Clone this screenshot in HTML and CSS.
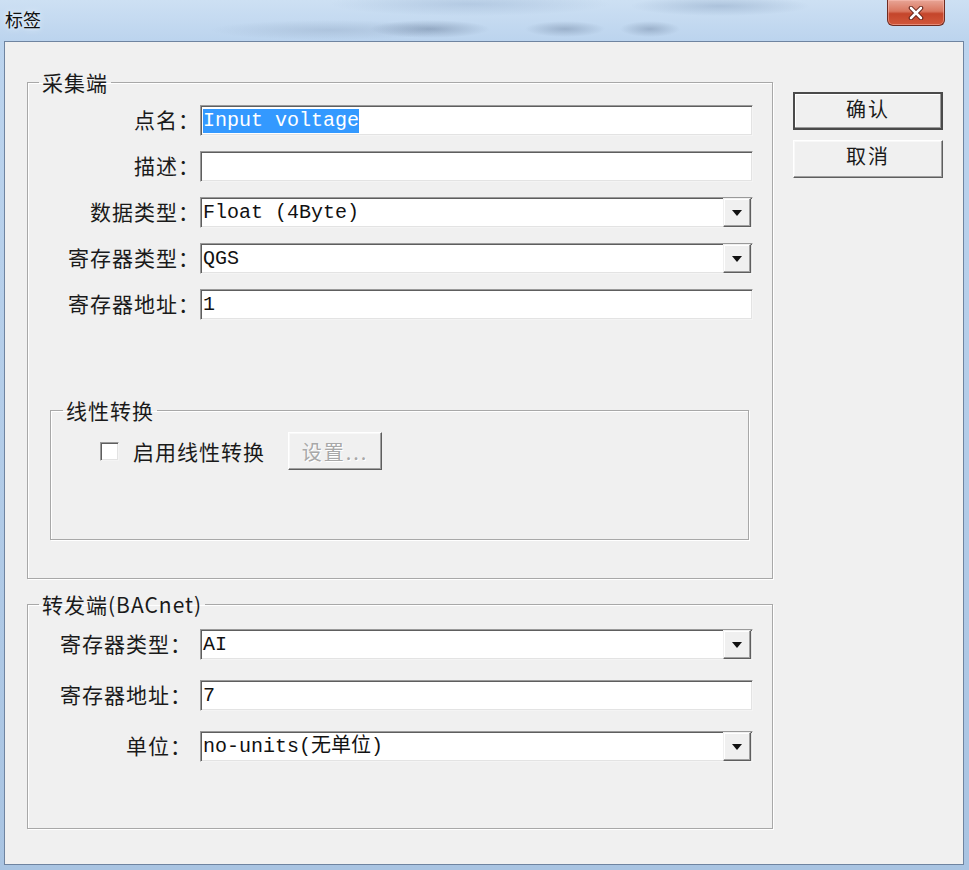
FILE: index.html
```html
<!DOCTYPE html>
<html lang="zh-CN">
<head>
  <meta charset="UTF-8">
  <title>标签</title>
  <link rel="stylesheet" href="styles.css">
</head>
<body>
  <div class="window">
    <div class="titlebar">
      <span class="title">标签</span>
      <div class="close-btn">
        <svg width="16" height="14" viewBox="0 0 16 14">
          <path d="M3 2 L13 12 M13 2 L3 12" stroke="#5a1b12" stroke-width="4.5" stroke-linecap="round"/>
          <path d="M3 2 L13 12 M13 2 L3 12" stroke="#ffffff" stroke-width="2.6" stroke-linecap="round"/>
        </svg>
      </div>
    </div>

    <div class="client">
      <div class="main-col">
        <!-- 采集端 -->
        <fieldset class="group group-collect">
          <legend>采集端</legend>
          <div class="form-grid">
            <label>点名：</label>
            <div class="edit"><span class="sel">Input voltage</span></div>

            <label>描述：</label>
            <div class="edit"></div>

            <label>数据类型：</label>
            <div class="edit combo"><span class="value">Float (4Byte)</span><span class="drop"></span></div>

            <label>寄存器类型：</label>
            <div class="edit combo"><span class="value">QGS</span><span class="drop"></span></div>

            <label>寄存器地址：</label>
            <div class="edit"><span class="value">1</span></div>
          </div>

          <fieldset class="group group-linear">
            <legend>线性转换</legend>
            <div class="linear-row">
              <span class="checkbox"></span>
              <span class="check-label">启用线性转换</span>
              <button class="btn btn-disabled">设置...</button>
            </div>
          </fieldset>
        </fieldset>

        <!-- 转发端 -->
        <fieldset class="group group-forward">
          <legend>转发端(BACnet)</legend>
          <div class="form-grid">
            <label>寄存器类型：</label>
            <div class="edit combo"><span class="value">AI</span><span class="drop"></span></div>

            <label>寄存器地址：</label>
            <div class="edit"><span class="value">7</span></div>

            <label>单位：</label>
            <div class="edit combo"><span class="value">no-units(无单位)</span><span class="drop"></span></div>
          </div>
        </fieldset>
      </div>

      <div class="side-col">
        <button class="btn btn-default">确认</button>
        <button class="btn">取消</button>
      </div>
    </div>
  </div>
</body>
</html>
```

FILE: styles.css
```css
/* Win7 style dialog */
* {
  box-sizing: border-box;
}

body {
  margin: 0;
  background: #fff;
  font-family: "Noto Sans CJK SC", "Noto Sans", sans-serif;
  color: #1a1a1a;
}

.window {
  width: 969px;
  height: 870px;
  display: flex;
  flex-direction: column;
  padding: 0 5px 5px 4px;
  background:
    radial-gradient(ellipse 60px 9px at 430px 29px, rgba(70, 90, 120, 0.35), transparent),
    radial-gradient(ellipse 40px 8px at 565px 29px, rgba(70, 90, 120, 0.3), transparent),
    radial-gradient(ellipse 30px 8px at 650px 29px, rgba(70, 90, 120, 0.3), transparent),
    radial-gradient(ellipse 120px 10px at 330px 30px, rgba(90, 110, 140, 0.18), transparent),
    radial-gradient(ellipse 90px 10px at 720px 6px, rgba(80, 110, 150, 0.25), transparent),
    radial-gradient(ellipse 140px 12px at 470px 4px, rgba(110, 140, 180, 0.25), transparent),
    linear-gradient(180deg, #cde0f3 0%, #bcd4ee 40px, #a9c4e2 100%);
}

.titlebar {
  height: 41px;
  display: flex;
  justify-content: space-between;
  align-items: flex-start;
}

.title {
  margin: 8px 0 0 1px;
  font-size: 18px;
  line-height: 22px;
  color: #111;
  text-shadow: 0 0 6px #e8f1fb, 0 0 3px #e8f1fb;
}

.close-btn {
  width: 58px;
  height: 26px;
  margin-right: 19px;
  display: flex;
  align-items: center;
  justify-content: center;
  border: 1px solid #6e2b20;
  border-top: none;
  border-radius: 0 0 6px 6px;
  background: linear-gradient(180deg, #e8a596 0%, #d9765f 45%, #c4452b 55%, #d2583b 100%);
  box-shadow: inset 0 0 0 1px rgba(255, 200, 190, 0.45);
}

.client {
  flex: 1;
  display: flex;
  gap: 20px;
  padding: 30px 0 0 22px;
  background: #f0f0f0;
  border: 1px solid #6f84a0;
}

.main-col {
  width: 746px;
  display: flex;
  flex-direction: column;
}

.side-col {
  display: flex;
  flex-direction: column;
  gap: 10px;
  margin-top: 20px;
}

/* group boxes */
.group {
  margin: 0;
  min-width: 0;
  border: 1px solid #a8a8a8;
  box-shadow: 1px 1px 0 #fff, inset 1px 1px 0 #fff;
}

.group legend {
  padding: 0 3px;
  margin-left: -11px;
  font-size: 21px;
  line-height: 20px;
  letter-spacing: 1px;
}

.group-collect {
  padding: 13px 19px 38px 22px;
}

.group-forward {
  margin-top: 15px;
  padding: 15px 19px 66px 22px;
}

.group-linear {
  margin: 80px 4px 0 0;
  padding: 12px 10px 69px 49px;
}

.group-linear legend {
  margin-left: -37px;
}

/* label + field rows */
.form-grid {
  display: grid;
  grid-template-columns: 150px 1fr;
  row-gap: 15px;
}

.group-forward .form-grid {
  row-gap: 20px;
}

.form-grid label {
  align-self: center;
  text-align: right;
  font-size: 21px;
  line-height: 24px;
  letter-spacing: 1px;
  white-space: nowrap;
  margin-top: -3px;
}

.group-forward .form-grid label {
  padding-right: 8px;
}

.edit {
  height: 31px;
  display: flex;
  align-items: center;
  padding-left: 2px;
  background: #fff;
  border: 1px solid;
  border-color: #9a9a9a #f4f4f4 #f4f4f4 #9a9a9a;
  box-shadow: inset 1px 1px 0 #5e5e5e, inset -1px -1px 0 #e3e3e3;
  font-family: "Liberation Mono", "Noto Sans CJK SC", monospace;
  font-size: 20px;
  color: #111;
}

.edit .value,
.edit .sel {
  line-height: 24px;
  white-space: pre;
}

.edit .sel {
  background: #3399ff;
  color: #fff;
}

.combo .value {
  flex: 1;
}

.drop {
  width: 28px;
  height: 100%;
  margin-right: 1px;
  display: flex;
  align-items: center;
  justify-content: center;
  background: #f0f0f0;
  border: 1px solid;
  border-color: #f0f0f0 #5e5e5e #5e5e5e #f0f0f0;
  box-shadow: inset -1px -1px 0 #a0a0a0, inset 1px 1px 0 #fff;
}

.drop::after {
  content: "";
  border-left: 5px solid transparent;
  border-right: 5px solid transparent;
  border-top: 6px solid #111;
}

/* linear conversion row */
.linear-row {
  display: flex;
  align-items: center;
  height: 38px;
}

.checkbox {
  width: 19px;
  height: 19px;
  background: #fff;
  border: 1px solid;
  border-color: #9a9a9a #f4f4f4 #f4f4f4 #9a9a9a;
  box-shadow: inset 1px 1px 0 #5e5e5e, inset -1px -1px 0 #e3e3e3;
}

.check-label {
  margin-left: 14px;
  font-size: 21px;
  letter-spacing: 1px;
}

/* buttons */
.btn {
  font-family: "Noto Sans CJK SC", "Noto Sans", sans-serif;
  font-size: 20px;
  letter-spacing: 2px;
  color: #1a1a1a;
  background: #f0f0f0;
  border: 1px solid;
  border-color: #fff #5e5e5e #5e5e5e #fff;
  box-shadow: inset -1px -1px 0 #a0a0a0, inset 1px 1px 0 #f8f8f8;
  padding: 0;
}

.side-col .btn {
  width: 150px;
  height: 38px;
  line-height: 30px;
  padding-bottom: 6px;
}

.btn-default {
  border: 2px solid #4a4a4a;
  box-shadow: inset -1px -1px 0 #9a9a9a, inset 1px 1px 0 #fff;
}

.btn-disabled {
  width: 94px;
  height: 38px;
  margin-left: 23px;
  color: #a8a8a8;
  text-shadow: 1px 1px 0 #fff;
}
```
